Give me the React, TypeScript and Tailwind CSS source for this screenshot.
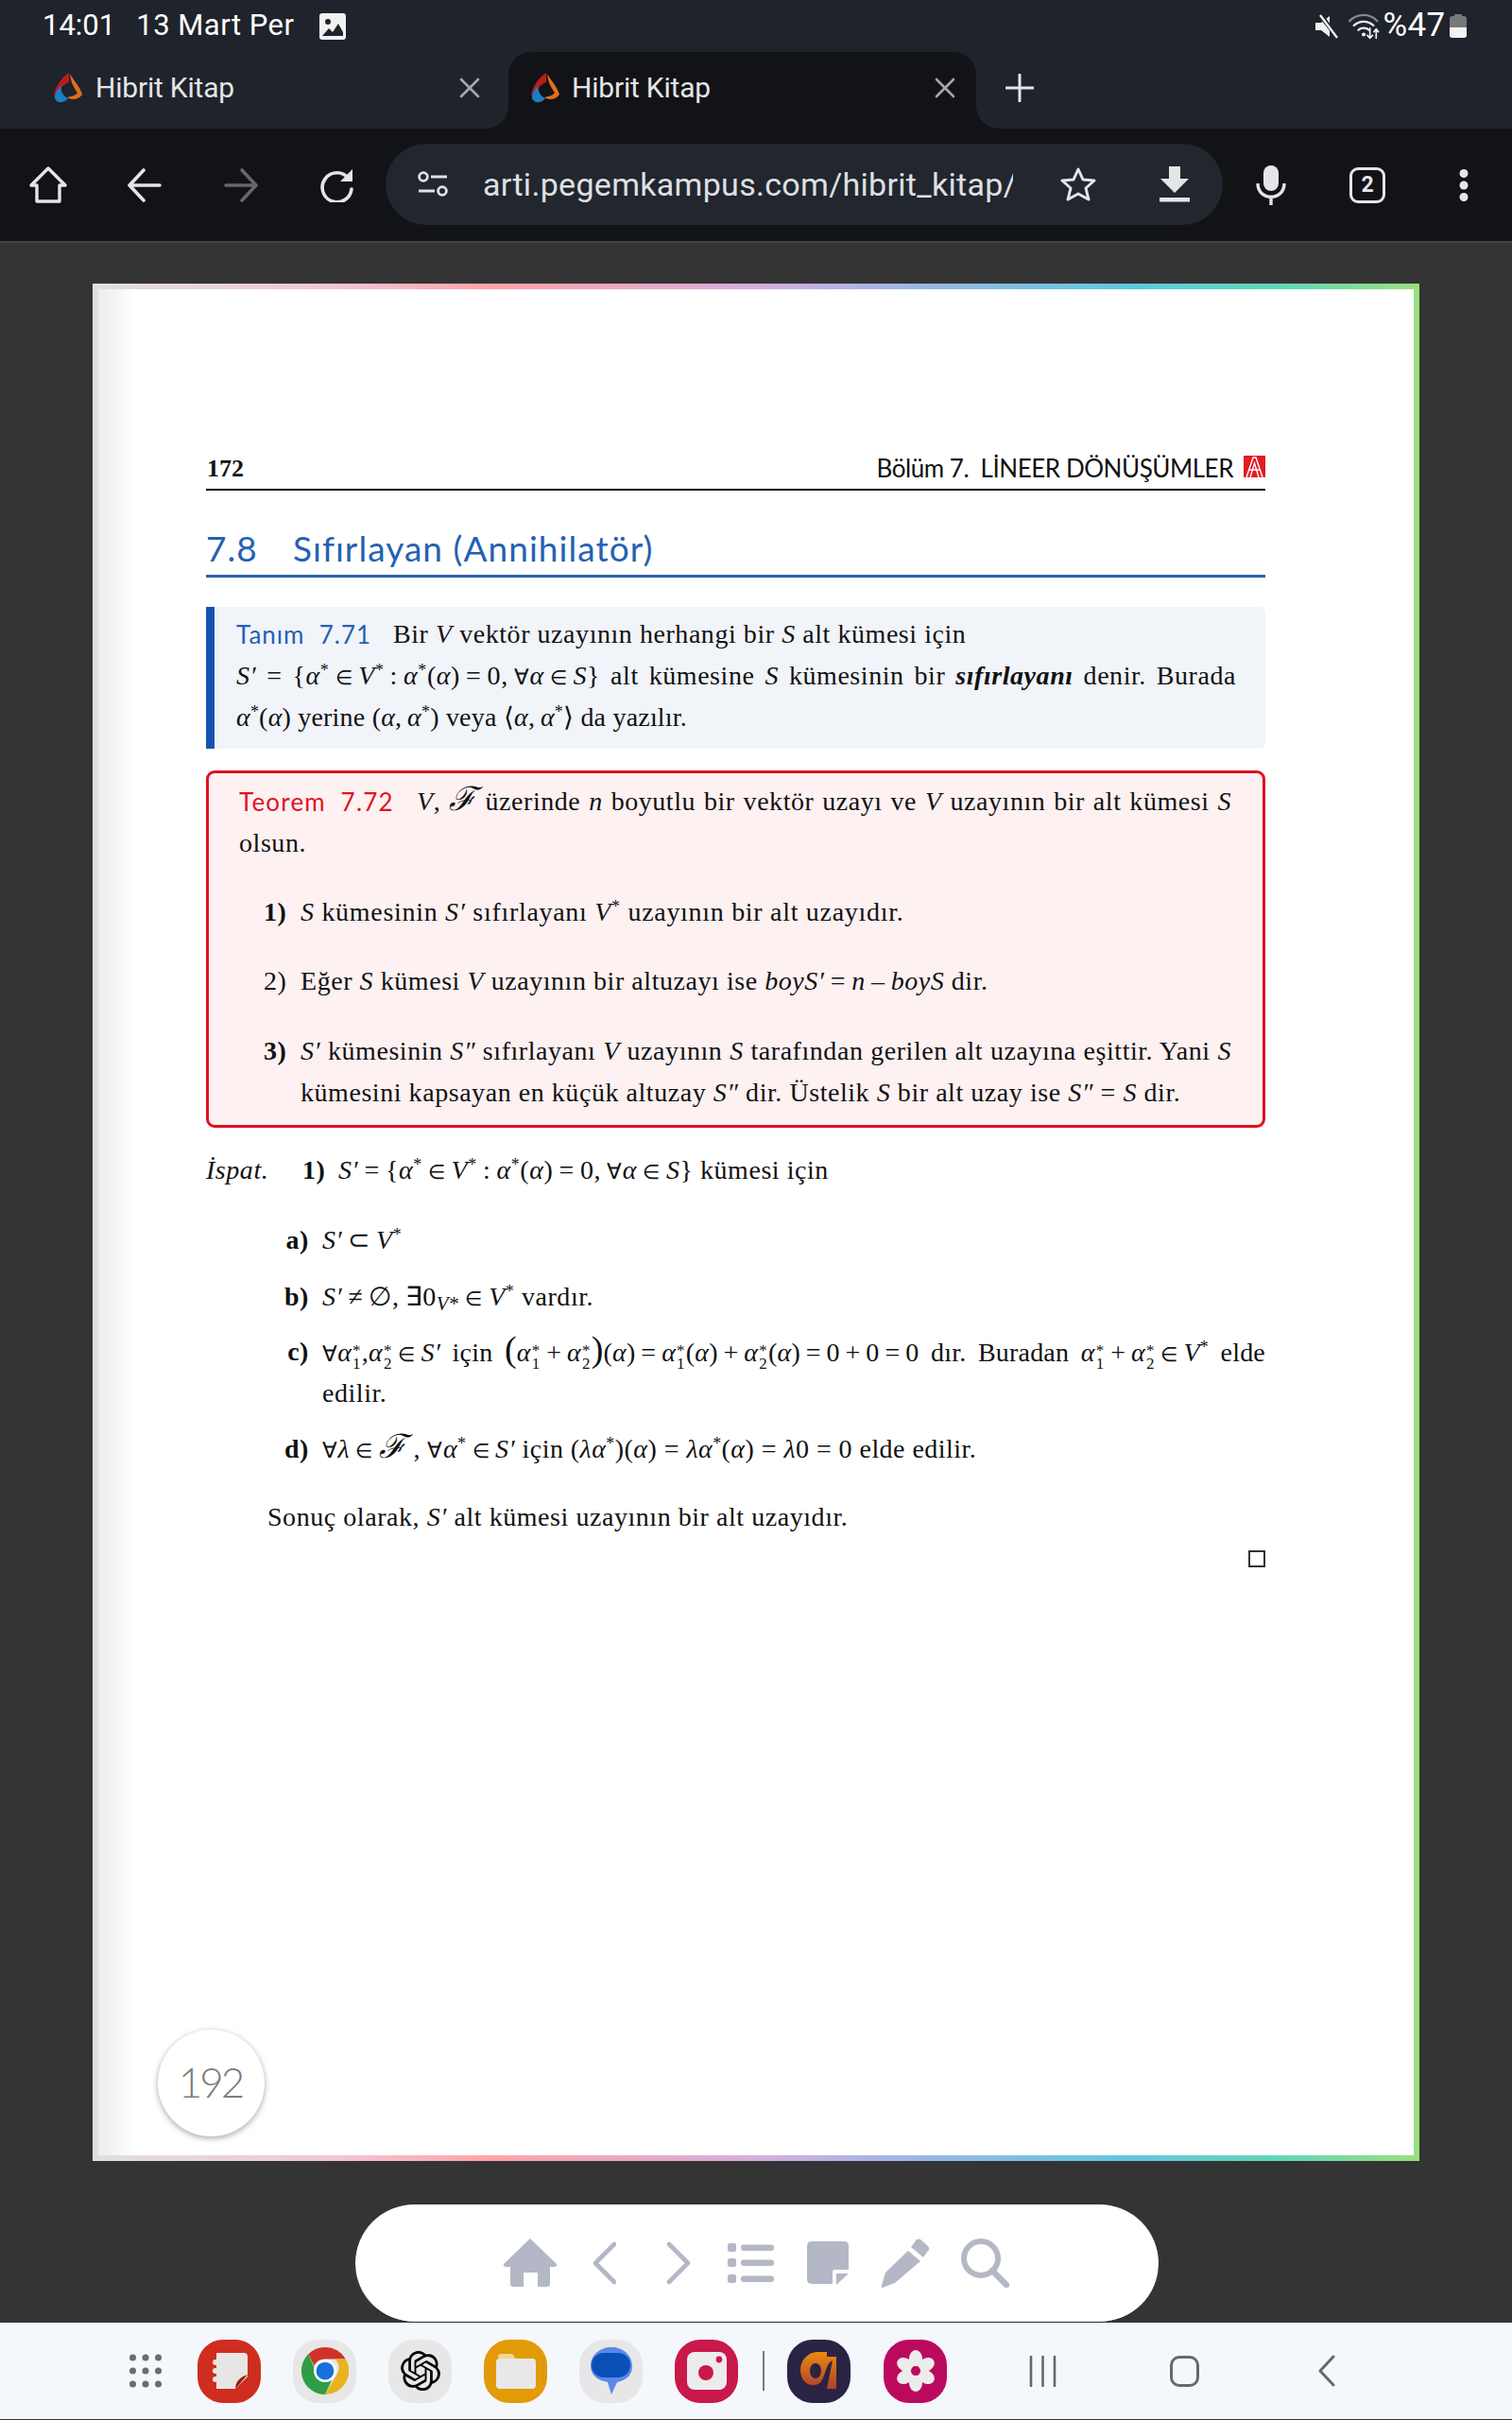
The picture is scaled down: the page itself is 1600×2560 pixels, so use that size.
import { SiOpenai } from "react-icons/si";

const I = ({ children }: { children: React.ReactNode }) => <i className="italic">{children}</i>;

// thin space for math, it does not stretch when a line is justified
const T = "\u2009";

// math symbols come from a wider fallback font, so keep them smaller than the text
const E = () => <span className="text-[21px]">∈</span>;
const A = () => <span className="text-[23px]">∀</span>;

// stacked super + subscript, like alpha*_1
const Idx = ({ sub }: { sub: string }) => (
  <span className="inline-flex flex-col align-middle text-[17px] leading-[14px] not-italic text-left mx-[1px] mt-[4px]">
    <span>*</span>
    <span>{sub}</span>
  </span>
);

const Favicon = () => (
  <svg width="34" height="34" viewBox="0 0 34 34" className="shrink-0">
    <path d="M18 1 C10 6 3 16 2 26 C6 20 11 14 18 11 Z" fill="#b81d1c" />
    <path d="M19 2 C22 8 30 16 32 24 C28 30 20 30 16 27 C22 26 26 24 27 22 C24 18 20 12 19 2Z" fill="#e0701c" />
    <path d="M3 28 C3 22 6 18 10 15 C9 20 11 25 17 28 C14 33 5 34 3 28Z" fill="#1b7fc0" />
  </svg>
);

const CloseX = () => (
  <svg width="22" height="22" viewBox="0 0 22 22" stroke="#a6a7aa" strokeWidth="2.6" strokeLinecap="round">
    <path d="M2 2 L20 20 M20 2 L2 20" />
  </svg>
);

const Cell = ({ children }: { children: React.ReactNode }) => (
  <div className="w-[102px] flex items-center justify-center shrink-0">{children}</div>
);

const Squircle = ({ bg, children }: { bg: string; children: React.ReactNode }) => (
  <div className={`w-[67px] h-[67px] rounded-[27px] flex items-center justify-center shrink-0 overflow-hidden ${bg}`}>{children}</div>
);

const Line = ({ className = "", children }: { className?: string; children: React.ReactNode }) => (
  <div className={`h-[44px] flex items-center whitespace-nowrap ${className}`}>{children}</div>
);

const Just = ({ className = "", children }: { className?: string; children: React.ReactNode }) => (
  <div className={`w-full text-justify [text-align-last:justify] whitespace-normal leading-[44px] h-[44px] ${className}`}>{children}</div>
);

const F = () => <span className="font-['DejaVu_Serif',serif] italic text-[35px] leading-none">ℱ</span>;

export default function App() {
  return (
    <div className="w-[1600px] h-[2560px] flex flex-col overflow-hidden bg-[#343434] font-['Roboto',sans-serif]">
      {/* status bar */}
      <div className="h-[55px] bg-[#1f232b] flex items-center pl-[45px] text-white text-[31px] shrink-0">
        <span>14:01</span>
        <span className="ml-[22px] tracking-[0.5px]">13 Mart Per</span>
        <svg width="28" height="28" viewBox="0 0 28 28" className="ml-[26px]">
          <rect width="28" height="28" rx="3" fill="#f1f1f1" />
          <circle cx="9" cy="9" r="3" fill="#1f232b" />
          <path d="M3 24 L10 16 L14 20 L20 11 L25 20 L25 24 Z" fill="#1f232b" />
        </svg>
        <svg width="26" height="26" viewBox="0 0 26 26" className="ml-[1025px]">
          <path d="M1 9 H7 L16 2 V24 L7 17 H1 Z" fill="#f1f1f1" />
          <path d="M7 2 L25 25" stroke="#1f232b" strokeWidth="5" />
          <path d="M6 1 L24 25" stroke="#f1f1f1" strokeWidth="2.4" />
        </svg>
        <svg width="34" height="28" viewBox="0 0 36 28" fill="none" className="ml-[10px]" strokeLinecap="round">
          <path d="M1 8 C10 -1 24 -1 32 8" stroke="#85878b" strokeWidth="2.4" />
          <path d="M6 13 C12 7 22 7 28 13" stroke="#f1f1f1" strokeWidth="2.4" />
          <path d="M11 18 C14 15 20 15 23 18" stroke="#f1f1f1" strokeWidth="2.4" />
          <circle cx="17" cy="23" r="2.2" fill="#f1f1f1" />
          <path d="M24 16 V27 M21 24 L24 27 L27 24 M31 27 V17 M28.5 20 L31 17 L33.5 20" stroke="#f1f1f1" strokeWidth="1.8" />
        </svg>
        <span className="ml-[3px] text-[35px] tracking-[0.3px]">%47</span>
        <svg width="18" height="25" viewBox="0 0 18 25" className="ml-[5px]">
          <rect x="5" width="8" height="3" rx="1" fill="#76787c" />
          <rect y="2" width="18" height="23" rx="3" fill="#76787c" />
          <path d="M0 14 H18 V22 A3 3 0 0 1 15 25 H3 A3 3 0 0 1 0 22 Z" fill="#f3f3f3" />
        </svg>
      </div>

      {/* tab strip */}
      <div className="h-[81px] flex bg-[#121317] shrink-0 text-[30px] text-[#e4e5e7]">
        <div className="w-[538px] bg-[#1f232b] rounded-br-[24px] flex items-center pl-[55px] pb-[6px]">
          <Favicon />
          <span className="ml-[12px] text-[30px] tracking-[-0.2px]">Hibrit Kitap</span>
          <span className="ml-[238px]"><CloseX /></span>
        </div>
        <div className="w-[495px] bg-[#1f232b]">
          <div className="h-full bg-[#121317] rounded-t-[24px] flex items-center pl-[22px] pb-[6px]">
            <Favicon />
            <span className="ml-[11px] text-[30px] tracking-[-0.2px]">Hibrit Kitap</span>
            <span className="ml-[237px]"><CloseX /></span>
          </div>
        </div>
        <div className="flex-1 bg-[#1f232b] rounded-bl-[24px] flex items-center pl-[31px] pb-[6px]">
          <svg width="30" height="30" viewBox="0 0 30 30" stroke="#e4e5e7" strokeWidth="3" strokeLinecap="round">
            <path d="M15 1 V29 M1 15 H29" />
          </svg>
        </div>
      </div>

      {/* toolbar */}
      <div className="h-[119px] bg-[#121317] flex shrink-0">
        <Cell>
          <svg width="40" height="40" viewBox="0 0 40 40" fill="none" stroke="#e4e5e7" strokeWidth="3.4" strokeLinejoin="round">
            <path d="M20 2 L38 20 H32 V37 H8 V20 H2 Z" />
          </svg>
        </Cell>
        <Cell>
          <svg width="36" height="36" viewBox="0 0 36 36" fill="none" stroke="#e4e5e7" strokeWidth="3.6" strokeLinecap="round" strokeLinejoin="round">
            <path d="M17 2 L2 18 L17 34 M3 18 H34" />
          </svg>
        </Cell>
        <Cell>
          <svg width="36" height="36" viewBox="0 0 36 36" fill="none" stroke="#66676a" strokeWidth="3.6" strokeLinecap="round" strokeLinejoin="round">
            <path d="M19 2 L34 18 L19 34 M33 18 H2" />
          </svg>
        </Cell>
        <Cell>
          <svg width="36" height="36" viewBox="0 0 36 36" fill="none">
            <path d="M30 11 A15.5 15.5 0 1 0 33 22" stroke="#e4e5e7" strokeWidth="3.6" strokeLinecap="round" />
            <path d="M34 1 V14 H21 Z" fill="#e4e5e7" />
          </svg>
        </Cell>
        <div className="w-[886px] h-[86px] my-[16px] rounded-full bg-[#22262e] flex items-center">
          <div className="w-[100px] flex justify-center shrink-0">
            <svg width="32" height="28" viewBox="0 0 32 28" fill="none" stroke="#dfe0e3" strokeWidth="2.8">
              <circle cx="6" cy="6" r="4.4" />
              <path d="M14 6 H31 M1 21 H18" />
              <circle cx="26" cy="21" r="4.4" />
            </svg>
          </div>
          <div className="w-[562px] ml-[3px] overflow-hidden whitespace-nowrap text-[34px] text-[#dfe0e3] tracking-[0.3px]">
            arti.pegemkampus.com/hibrit_kitap/1
          </div>
          <div className="w-[102px] ml-[18px] flex justify-center shrink-0">
            <svg width="38" height="36" viewBox="0 0 38 36" fill="none" stroke="#e4e5e7" strokeWidth="3" strokeLinejoin="round">
              <path d="M19 2 L24 13 L36 14 L27 22 L30 34 L19 28 L8 34 L11 22 L2 14 L14 13 Z" />
            </svg>
          </div>
          <div className="w-[102px] flex justify-center shrink-0">
            <svg width="32" height="38" viewBox="0 0 32 38" fill="#e4e5e7">
              <path d="M10 0 H22 V13 H31 L16 28 L1 13 H10 Z" />
              <rect y="33" width="32" height="4.5" />
            </svg>
          </div>
        </div>
        <Cell>
          <svg width="32" height="42" viewBox="0 0 32 42" fill="none">
            <rect x="8" width="16" height="27" rx="8" fill="#e4e5e7" />
            <path d="M2 19 C2 38 30 38 30 19 M16 32 V42" stroke="#e4e5e7" strokeWidth="3.4" />
          </svg>
        </Cell>
        <Cell>
          <div className="w-[38px] h-[38px] rounded-[9px] border-[3px] border-[#e4e5e7] flex items-center justify-center text-[23px] font-bold text-[#e4e5e7] leading-none">2</div>
        </Cell>
        <Cell>
          <svg width="10" height="34" viewBox="0 0 10 34" fill="#e4e5e7">
            <circle cx="5" cy="4.5" r="4.5" />
            <circle cx="5" cy="17" r="4.5" />
            <circle cx="5" cy="29.5" r="4.5" />
          </svg>
        </Cell>
      </div>
      <div className="h-[2px] bg-[#434447] shrink-0" />

      {/* viewer */}
      <div className="flex-1 flex flex-col">
        <div className="ml-[98px] mt-[43px] w-[1404px] h-[1986px] p-[6px] bg-[linear-gradient(90deg,#e0e0e0_0%,#f0c6d6_18%,#ffa3a8_30%,#d6aede_50%,#9cb6e6_62%,#60c8e0_78%,#62d8b4_90%,#9cdf7f_100%)]">
          <div className="relative h-full bg-[linear-gradient(90deg,#ececec,#ffffff_40px)] pl-[114px] pr-[157px] pt-[169px] text-[#111111] font-['Liberation_Serif',serif] text-[28px] tracking-[0.55px] [&_sup]:text-[18px]">
            {/* running head */}
            <div className="h-[44px] border-b-2 border-black flex items-center justify-between pb-[2px]">
              <span className="font-bold text-[26px] pl-[1px] tracking-normal">172</span>
              <div className="flex items-center font-['Lato',sans-serif] text-[26px] tracking-[-0.45px]">
                <span>Bölüm 7.&nbsp;&nbsp;LİNEER DÖNÜŞÜMLER</span>
                <svg width="23" height="23" viewBox="0 0 23 23" className="ml-[11px] mb-[3px]">
                  <rect width="23" height="23" fill="#e31b23" />
                  <path d="M3 23 L10 2 H13 L20 23 M7 23 L11.5 8 L16 23 M6 15 H17" stroke="#fff" strokeWidth="1.4" fill="none" />
                </svg>
              </div>
            </div>

            {/* section title */}
            <div className="mt-[36px] h-[56px] border-b-[3px] border-[#2a62b0] flex items-center text-[#2461b2] font-['Lato',sans-serif] text-[37px] tracking-[1.05px] pb-[3px]">
              <span className="w-[92px]">7.8</span>
              <span>Sıfırlayan (Annihilatör)</span>
            </div>

            {/* Tanim box */}
            <div className="mt-[31px] h-[150px] bg-[#f1f4f9] border-l-[9px] border-[#1254ae] rounded-r-[6px] pl-[23px] pr-[31px] pt-[7px]">
              <Line>
                <span className="font-['Lato',sans-serif] text-[#2461b2] text-[26px] tracking-[1px] w-[166px]">Tanım&nbsp;&nbsp;7.71</span>
                <span>Bir <I>V</I> vektör uzayının herhangi bir <I>S</I> alt kümesi için</span>
              </Line>
              <Just>
                <I>S′</I> = {"{"}<I>α</I><sup>*</sup>{T}<E />{T}<I>V</I><sup>*</sup>{T}:{T}<I>α</I><sup>*</sup>(<I>α</I>){T}={T}0,{T}<A /><I>α</I>{T}<E />{T}<I>S</I>{"}"} alt kümesine <I>S</I> kümesinin bir <b className="italic font-bold">sıfırlayanı</b> denir. Burada
              </Just>
              <Line className="tracking-[0.2px]">
                <span><I>α</I><sup>*</sup>(<I>α</I>) yerine (<I>α</I>,{T}<I>α</I><sup>*</sup>) veya ⟨<I>α</I>,{T}<I>α</I><sup>*</sup>⟩ da yazılır.</span>
              </Line>
            </div>

            {/* Teorem box */}
            <div className="mt-[23px] h-[378px] bg-[#fdf1f2] border-[3px] border-[#e01020] rounded-[9px] pl-[32px] pr-[33px] pt-[8px]">
              <Line>
                <span className="font-['Lato',sans-serif] text-[#e0141e] text-[26px] tracking-[1.2px] w-[188px] shrink-0">Teorem&nbsp;&nbsp;7.72</span>
                <Just>
                  <I>V</I>, <F /> üzerinde <I>n</I> boyutlu bir vektör uzayı ve <I>V</I> uzayının bir alt kümesi <I>S</I>
                </Just>
              </Line>
              <Line>olsun.</Line>
              <Line className="mt-[29px] pl-[26px]">
                <b className="w-[39px] shrink-0">1)</b>
                <span className="tracking-[0.7px]"><I>S</I> kümesinin <I>S′</I> sıfırlayanı <I>V</I><sup>*</sup> uzayının bir alt uzayıdır.</span>
              </Line>
              <Line className="mt-[29px] pl-[26px]">
                <span className="w-[39px] shrink-0">2)</span>
                <span>Eğer <I>S</I> kümesi <I>V</I> uzayının bir altuzayı ise <I>boyS′</I>{T}={T}<I>n</I>{T}–{T}<I>boyS</I> dir.</span>
              </Line>
              <Line className="mt-[30px] pl-[26px]">
                <b className="w-[39px] shrink-0">3)</b>
                <Just>
                  <I>S′</I> kümesinin <I>S″</I> sıfırlayanı <I>V</I> uzayının <I>S</I> tarafından gerilen alt uzayına eşittir. Yani <I>S</I>
                </Just>
              </Line>
              <Line className="pl-[65px]">
                <span>kümesini kapsayan en küçük altuzay <I>S″</I> dir. Üstelik <I>S</I> bir alt uzay ise <I>S″</I> = <I>S</I> dir.</span>
              </Line>
            </div>

            {/* proof */}
            <Line className="mt-[23px]">
              <I><span className="inline-block w-[102px]">İspat.</span></I>
              <b className="w-[38px]">1)</b>
              <span><I>S′</I>{T}={T}{"{"}<I>α</I><sup>*</sup>{T}<E />{T}<I>V</I><sup>*</sup>{T}:{T}<I>α</I><sup>*</sup>(<I>α</I>){T}={T}0,{T}<A /><I>α</I>{T}<E />{T}<I>S</I>{"}"} kümesi için</span>
            </Line>
            <Line className="mt-[30px] pl-[82px]">
              <b className="w-[27px] text-right mr-[14px]">a)</b>
              <span><I>S′</I>{T}⊂{T}<I>V</I><sup>*</sup></span>
            </Line>
            <Line className="mt-[16px] pl-[82px]">
              <b className="w-[27px] text-right mr-[14px]">b)</b>
              <span><I>S′</I>{T}≠{T}∅,{T}∃0<sub><I>V</I>*</sub>{T}<E />{T}<I>V</I><sup>*</sup> vardır.</span>
            </Line>
            <Line className="mt-[14px] pl-[82px]">
              <b className="w-[27px] text-right mr-[14px] shrink-0">c)</b>
              <Just className="tracking-[0.2px]">
                <A /><I>α</I><Idx sub="1" />,<I>α</I><Idx sub="2" />{T}<E />{T}<I>S′</I> için <span className="text-[38px] leading-none font-light">(</span><I>α</I><Idx sub="1" />{T}+{T}<I>α</I><Idx sub="2" /><span className="text-[38px] leading-none font-light">)</span>(<I>α</I>){T}={T}<I>α</I><Idx sub="1" />(<I>α</I>){T}+{T}<I>α</I><Idx sub="2" />(<I>α</I>){T}={T}0{T}+{T}0{T}={T}0 dır. Buradan <I>α</I><Idx sub="1" />{T}+{T}<I>α</I><Idx sub="2" />{T}<E />{T}<I>V</I><sup>*</sup> elde
              </Just>
            </Line>
            <Line className="pl-[123px]">edilir.</Line>
            <Line className="mt-[15px] pl-[82px]">
              <b className="w-[27px] text-right mr-[14px]">d)</b>
              <span className="tracking-[0.45px]"><A /><I>λ</I>{T}<E />{T}<F /> , <A /><I>α</I><sup>*</sup>{T}<E />{T}<I>S′</I> için (<I>λα</I><sup>*</sup>)(<I>α</I>) = <I>λα</I><sup>*</sup>(<I>α</I>) = <I>λ</I>0 = 0 elde edilir.</span>
            </Line>
            <Line className="mt-[28px] pl-[65px]">
              <span>Sonuç olarak, <I>S′</I> alt kümesi uzayının bir alt uzayıdır.</span>
            </Line>
            <div className="mt-[13px] flex justify-end">
              <div className="w-[18px] h-[18px] border-2 border-[#333333]" />
            </div>

            {/* page number badge */}
            <div className="absolute left-[63px] top-[1841px] w-[113px] h-[113px] rounded-full bg-white shadow-[0_2px_6px_rgba(0,0,0,0.35)] flex items-center justify-center font-['Lato',sans-serif] font-light text-[44px] tracking-[-3px] text-[#7d7d7d] pb-[4px] pr-[2px]">
              192
            </div>
          </div>
        </div>

        {/* pdf toolbar */}
        <div className="ml-[376px] mt-[46px] w-[850px] h-[125px] rounded-full bg-white flex items-center pl-[156px] border-b border-[#2a2a2a]">
          <svg width="58" height="52" viewBox="0 0 58 52" fill="#b4b8c6">
            <path d="M29 0 L57 27 Q58 30 54 30 H50 V48 Q50 51 47 51 H37 V36 H22 V51 H11 Q8 51 8 48 V30 H4 Q0 30 1 27 Z" />
          </svg>
          <svg width="25" height="46" viewBox="0 0 25 46" fill="none" stroke="#b4b8c6" strokeWidth="4.6" strokeLinecap="round" strokeLinejoin="round" className="ml-[37px]">
            <path d="M23 3 L3 23 L23 43" />
          </svg>
          <svg width="26" height="46" viewBox="0 0 26 46" fill="none" stroke="#b4b8c6" strokeWidth="4.6" strokeLinecap="round" strokeLinejoin="round" className="ml-[53px]">
            <path d="M3 3 L23 23 L3 43" />
          </svg>
          <svg width="49" height="42" viewBox="0 0 49 42" fill="#b4b8c6" className="ml-[39px]">
            <rect width="9" height="9" rx="2" />
            <rect y="16" width="9" height="9" rx="2" />
            <rect y="33" width="9" height="9" rx="2" />
            <rect x="14" y="1.5" width="35" height="6.5" rx="3" />
            <rect x="14" y="17.5" width="35" height="6.5" rx="3" />
            <rect x="14" y="34.5" width="35" height="6.5" rx="3" />
          </svg>
          <svg width="44" height="46" viewBox="0 0 44 46" fill="#b4b8c6" className="ml-[35px]">
            <path d="M5 0 H39 Q44 0 44 5 V30 H29 Q27 30 27 32 V45 H5 Q0 45 0 40 V5 Q0 0 5 0 Z" />
            <path d="M31 34 H44 L31 46 Z" />
          </svg>
          <svg width="52" height="52" viewBox="0 0 52 52" fill="#b4b8c6" className="ml-[34px]">
            <path d="M38 1 Q40 0 42 1 L50 8 Q52 10 51 12 L45 20 L32 9 Z" />
            <path d="M29 13 L42 24 L15 47 L2 52 Q0 52 1 49 L5 36 Z" />
          </svg>
          <svg width="51" height="52" viewBox="0 0 51 52" fill="none" stroke="#b4b8c6" className="ml-[33px]">
            <circle cx="21" cy="21" r="18" strokeWidth="6" />
            <path d="M33 34 L48 49" strokeWidth="6.5" strokeLinecap="round" />
          </svg>
        </div>

        {/* system dock */}
        <div className="h-[102px] bg-[#f4f7fb] flex items-center pl-[137px] shrink-0">
          <svg width="34" height="36" viewBox="0 0 34 36" fill="#6c6c6c" className="shrink-0">
            {[3.5, 17, 30.5].flatMap((cx) =>
              [4, 18, 32].map((cy) => <circle key={`${cx}-${cy}`} cx={cx} cy={cy} r="3.5" />)
            )}
          </svg>
          <div className="ml-[38px] flex gap-[34px]">
            <Squircle bg="bg-[#cf2d20]">
              <svg width="40" height="40" viewBox="0 0 40 40">
                <path d="M6 1 H35 Q39 1 39 5 V26 L26 39 H6 Z" fill="#e8e6e4" />
                <circle cx="5" cy="11" r="3" fill="#e8e6e4" />
                <circle cx="5" cy="20" r="3" fill="#e8e6e4" />
                <circle cx="5" cy="29" r="3" fill="#e8e6e4" />
                <path d="M39 24 L26 39 Q26 28 39 24 Z" fill="#8c1c14" />
              </svg>
            </Squircle>
            <Squircle bg="bg-[#e7e7e7]">
              <svg width="50" height="50" viewBox="0 0 48 48">
                <path d="M24 0 A24 24 0 0 1 45 12 H24 A12 12 0 0 0 13 19 L7 7 A24 24 0 0 1 24 0 Z" fill="#cf3327" />
                <path d="M45 12 A24 24 0 0 1 24 48 L35 29 A12 12 0 0 0 34 12 Z" fill="#e8b31e" />
                <path d="M7 7 L18 32 A12 12 0 0 0 31 33 L24 48 A24 24 0 0 1 7 7 Z" fill="#2f9d46" />
                <circle cx="24" cy="24" r="11.5" fill="#fff" />
                <circle cx="24" cy="24" r="9" fill="#1a6fdc" />
              </svg>
            </Squircle>
            <Squircle bg="bg-[#e7e7e7]">
              <SiOpenai size={42} color="#000" />
            </Squircle>
            <Squircle bg="bg-[#e29a06]">
              <svg width="42" height="38" viewBox="0 0 42 38">
                <path d="M2 4 Q2 1 5 1 H16 Q19 1 20 6 H2 Z" fill="#f2d394" />
                <rect y="6" width="42" height="32" rx="4" fill="#e8e8e8" />
              </svg>
            </Squircle>
            <Squircle bg="bg-[#e7e7e7]">
              <svg width="44" height="50" viewBox="0 0 44 50">
                <path d="M22 0 C34 0 44 8 44 20 C44 32 34 36 28 37 L22 50 L18 37 C8 35 0 30 0 20 C0 8 10 0 22 0 Z" fill="#5c89e6" />
                <rect x="1" y="6" width="41" height="26" rx="13" fill="#0a4fb8" />
              </svg>
            </Squircle>
            <Squircle bg="bg-[#c9184a]">
              <svg width="42" height="40" viewBox="0 0 42 40">
                <rect width="42" height="40" rx="8" fill="#ececec" />
                <circle cx="20" cy="22" r="8" fill="#c9184a" />
                <circle cx="34" cy="8" r="3.4" fill="#c9184a" />
              </svg>
            </Squircle>
          </div>
          <div className="ml-[26px] w-[2px] h-[42px] bg-[#777a7e] shrink-0" />
          <div className="ml-[24px] shrink-0">
            <Squircle bg="bg-[#2b2344]">
              <svg width="44" height="42" viewBox="0 0 44 42">
                <defs>
                  <linearGradient id="dk" x1="0" y1="0" x2="0" y2="1">
                    <stop offset="0" stopColor="#e98a0e" />
                    <stop offset="1" stopColor="#b1402c" />
                  </linearGradient>
                </defs>
                <path d="M20 1 H30 V6 H40 V40 H30 L36 10 C26 14 30 36 16 36 C6 36 2 28 2 20 C2 10 10 1 20 1 Z" fill="url(#dk)" />
                <ellipse cx="18" cy="21" rx="6" ry="8" fill="#2b2344" />
              </svg>
            </Squircle>
          </div>
          <div className="ml-[35px] shrink-0">
            <Squircle bg="bg-[#bb0a5e]">
              <svg width="44" height="44" viewBox="0 0 44 44">
                {[0, 60, 120, 180, 240, 300].map((a) => (
                  <ellipse key={a} cx="22" cy="9" rx="7" ry="9" fill="#ececec" transform={`rotate(${a} 22 22)`} />
                ))}
                <circle cx="22" cy="22" r="5" fill="#bb0a5e" />
              </svg>
            </Squircle>
          </div>
          <svg width="29" height="33" viewBox="0 0 29 33" stroke="#66686b" strokeWidth="2.6" strokeLinecap="round" className="ml-[87px] shrink-0">
            <path d="M2 1 V32 M14.5 1 V32 M27 1 V32" />
          </svg>
          <div className="ml-[120px] w-[31px] h-[33px] rounded-[10px] border-[3px] border-[#66686b] shrink-0" />
          <svg width="18" height="34" viewBox="0 0 18 34" fill="none" stroke="#66686b" strokeWidth="3" strokeLinecap="round" strokeLinejoin="round" className="ml-[126px] shrink-0">
            <path d="M16 2 L2 17 L16 32" />
          </svg>
        </div>
      </div>
    </div>
  );
}
